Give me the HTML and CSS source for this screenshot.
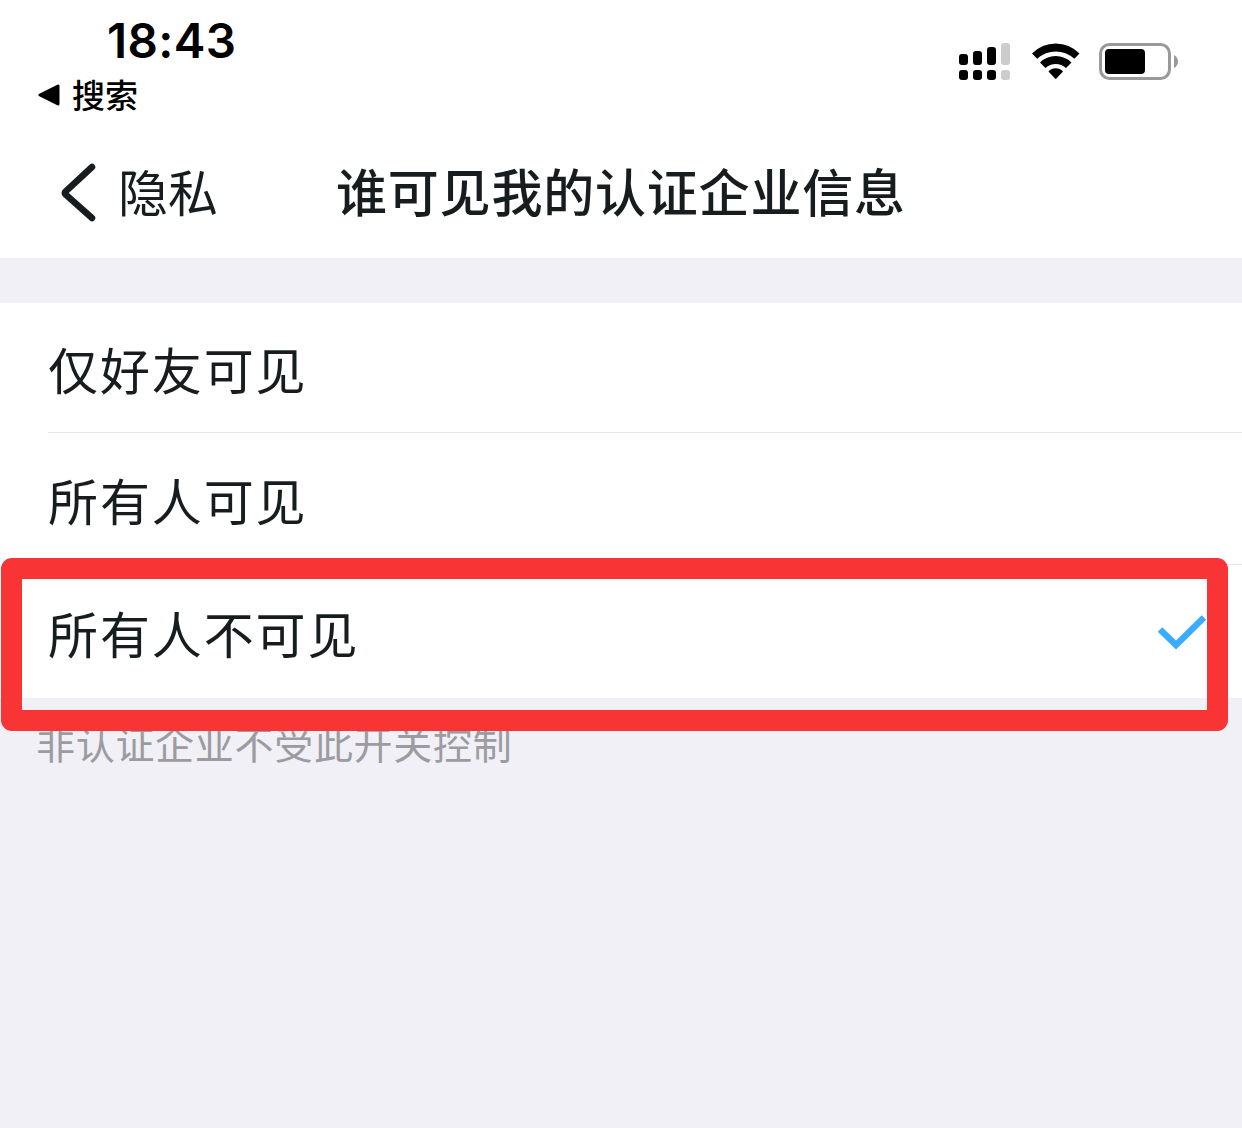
FILE: index.html
```html
<!DOCTYPE html>
<html lang="zh-CN">
	<head>
		<meta charset="utf-8">
		<title>谁可见我的认证企业信息</title>
		<link rel="stylesheet" href="styles.css">
	</head>
	<body>

		<header class="header">
			<div class="status-bar">
				<div class="status-left">
					<div class="time">18:43</div>
					<div class="return-app">
						<svg class="return-arrow" width="22" height="22" viewBox="0 0 22 22">
							<path d="M2 11L20 2V20Z" stroke="#000" stroke-width="3" stroke-linejoin="round"/>
						</svg>
						<span class="return-label">搜索</span>
					</div>
				</div>
				<div class="status-icons">
					<svg width="51" height="37" viewBox="0 0 51 37">
						<rect x="0" y="11" width="9" height="11" rx="3"/>
						<rect x="14" y="8" width="9" height="14" rx="3"/>
						<rect x="28" y="4" width="9" height="18" rx="3"/>
						<rect x="42" y="0" width="9" height="22" rx="3" fill="#ccc"/>
						<rect x="0" y="27" width="9" height="10" rx="3"/>
						<rect x="14" y="27" width="9" height="10" rx="3"/>
						<rect x="28" y="27" width="9" height="10" rx="3"/>
						<rect x="42" y="27" width="9" height="10" rx="3" fill="#ccc"/>
					</svg>
					<svg class="wifi" width="48" height="37" viewBox="0 0 48 37">
						<path d="M0 10.500Q10 0.500 23.700 0.500T47.500 10.500L42.300 15.800Q34 8.500 23.700 8.500T5.200 15.800Z"/>
						<path d="M8 19.500Q14.500 13 23.700 13T39.500 19.500L34 25Q29.500 21 23.700 21T13.500 25Z"/>
						<path d="M16.500 28.500Q19.500 25.300 23.700 25.300T31 28.500L24.400 35.600Q23.700 36.300 23 35.600Z"/>
					</svg>
					<svg width="79" height="37" viewBox="0 0 79 37">
						<rect x="1.500" y="1.500" width="69" height="34" rx="9" fill="none" stroke="#999" stroke-width="3"/>
						<rect x="6" y="6" width="40" height="25" rx="4"/>
						<path d="M75 12Q79 14.500 79 18.500T75 25Z" fill="#999"/>
					</svg>
				</div>
			</div>
			<nav class="nav-bar">
				<a class="back">
					<svg width="36" height="60" viewBox="0 0 36 60">
						<path d="M32 4L5.500 28.500Q4 30 5.500 31.500L32 55" fill="none" stroke="#171c1f" stroke-width="6.500" stroke-linecap="round"/>
					</svg>
					<span class="back-label">隐私</span>
				</a>
				<h1 class="title">谁可见我的认证企业信息</h1>
			</nav>
		</header>

		<main class="settings">
			<ul class="options">
				<li class="option">仅好友可见</li>
				<li class="option">所有人可见</li>
				<li class="option selected">
					<span>所有人不可见</span>
					<svg class="check" width="48" height="36" viewBox="0 0 48 36">
						<path d="M2 14.500L18 30L46 2.500" fill="none" stroke="#38adff" stroke-width="6.500"/>
					</svg>
					<div class="highlight"></div>
				</li>
			</ul>
			<p class="note">非认证企业不受此开关控制</p>
		</main>

	</body>
</html>
```
FILE: styles.css
```css
* {
	box-sizing:				border-box;
}

body {
	background:				#f1f0f6;
	color:					#171c1f;
	font-family:			"Noto Sans CJK SC", sans-serif;
	font-size:				50px;
	height:					1128px;
	letter-spacing:			1.9px;
	margin:					0;
	overflow:				hidden;
}

svg {
	display:				block;
	flex:					none;
}

.header {
	background:				#fff;
	height:					258px;
}

.status-bar {
	color:					#000;
	display:				flex;
	height:					128px;
	justify-content:		space-between;
	padding:				16px 64px 0 38px;
}

.time {
	font-family:			"Inter", sans-serif;
	font-size:				47.5px;
	font-weight:			600;
	letter-spacing:			0.4px;
	line-height:			50px;
	padding-left:			69px;
}

.return-app {
	align-items:			center;
	display:				flex;
	font-size:				33px;
	font-weight:			500;
	gap:					12px;
	letter-spacing:			0;
	line-height:			40px;
	margin-top:				10px;
}

.return-label {
	margin-top:				-2px;
}

.status-icons {
	display:				flex;
	padding-top:			27px;
}

.wifi {
	margin:					0 19px 0 22px;
}

.nav-bar {
	align-items:			center;
	display:				flex;
	height:					130px;
	padding-left:			60px;
}

.back {
	align-items:			center;
	display:				flex;
	gap:					22px;
	width:					276px;
}

.back-label {
	letter-spacing:			0;
	padding-bottom:			6px;
}

.title {
	font-size:				51px;
	font-weight:			500;
	letter-spacing:			0.8px;
	margin:					0;
	padding-bottom:			6px;
}

.settings {
	padding-top:			45px;
}

.options {
	background:				#fff;
	list-style:				none;
	margin:					0;
	padding:				0 0 0 48px;
}

.option {
	align-items:			center;
	border-bottom:			1px solid #e6e6e8;
	display:				flex;
	height:					130px;
	justify-content:		space-between;
	padding:				1px 36px 0 0;
	position:				relative;
}

.option + .option {
	height:					132px;
}

.option.selected {
	border-bottom:			none;
	height:					133px;
}

.check {
	margin-top:				2px;
}

/* red frame round the chosen row, drawn over its neighbours */
.highlight {
	border:					21px solid #f83434;
	border-radius:			11px;
	height:					173px;
	left:					-47px;
	position:				absolute;
	top:					-7px;
	width:					1227px;
}

.note {
	color:					#9c9ca0;
	font-size:				39px;
	letter-spacing:			0.7px;
	line-height:			56px;
	margin:					16px 0 0 36px;
}
```
